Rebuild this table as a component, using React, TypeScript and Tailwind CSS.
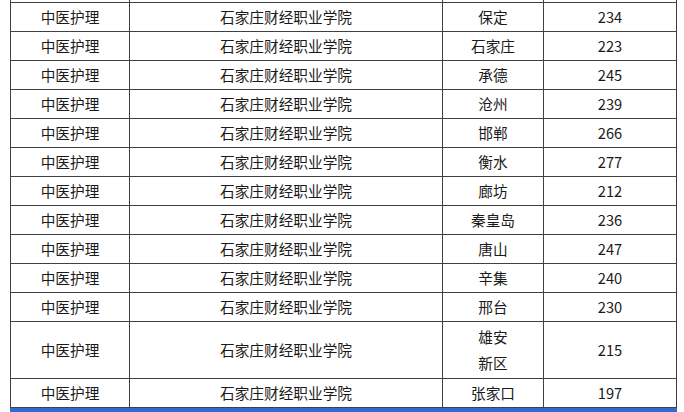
const ROWS: { city: string[]; score: number }[] = [
  { city: ["保定"], score: 234 },
  { city: ["石家庄"], score: 223 },
  { city: ["承德"], score: 245 },
  { city: ["沧州"], score: 239 },
  { city: ["邯郸"], score: 266 },
  { city: ["衡水"], score: 277 },
  { city: ["廊坊"], score: 212 },
  { city: ["秦皇岛"], score: 236 },
  { city: ["唐山"], score: 247 },
  { city: ["辛集"], score: 240 },
  { city: ["邢台"], score: 230 },
  { city: ["雄安", "新区"], score: 215 },
  { city: ["张家口"], score: 197 },
];

const cell =
  "flex flex-col items-center justify-center border-l border-b border-[#404040] leading-[26px]";

export default function App() {
  return (
    <div
      className="h-[412px] w-[684px] overflow-hidden bg-white text-[14.67px] text-[#1a1a1a]"
      style={{ fontFamily: '"Noto Sans CJK SC", "Noto Sans", sans-serif' }}
    >
      <div className="ml-[10px] w-[667px] border-r border-[#404040]">
        <div className="grid grid-cols-[119px_313px_101px_133px]">
          {/* cut-off row above */}
          <div className="h-[3px] border-l border-b border-[#404040]" />
          <div className="h-[3px] border-l border-b border-[#404040]" />
          <div className="h-[3px] border-l border-b border-[#404040]" />
          <div className="h-[3px] border-l border-b border-[#404040]" />

          {ROWS.map((row) => {
            const h = row.city.length > 1 ? "h-[57px]" : "h-[29px]";
            return (
              <div key={row.city.join("")} className="contents">
                <div className={`${cell} ${h}`}>中医护理</div>
                <div className={`${cell} ${h}`}>石家庄财经职业学院</div>
                <div className={`${cell} ${h}`}>
                  {row.city.map((c) => (
                    <span key={c}>{c}</span>
                  ))}
                </div>
                <div className={`${cell} ${h}`}>{row.score}</div>
              </div>
            );
          })}
        </div>
      </div>
      <div className="ml-[10px] h-[4px] w-[667px] bg-[#2f6bd0]" />
    </div>
  );
}
